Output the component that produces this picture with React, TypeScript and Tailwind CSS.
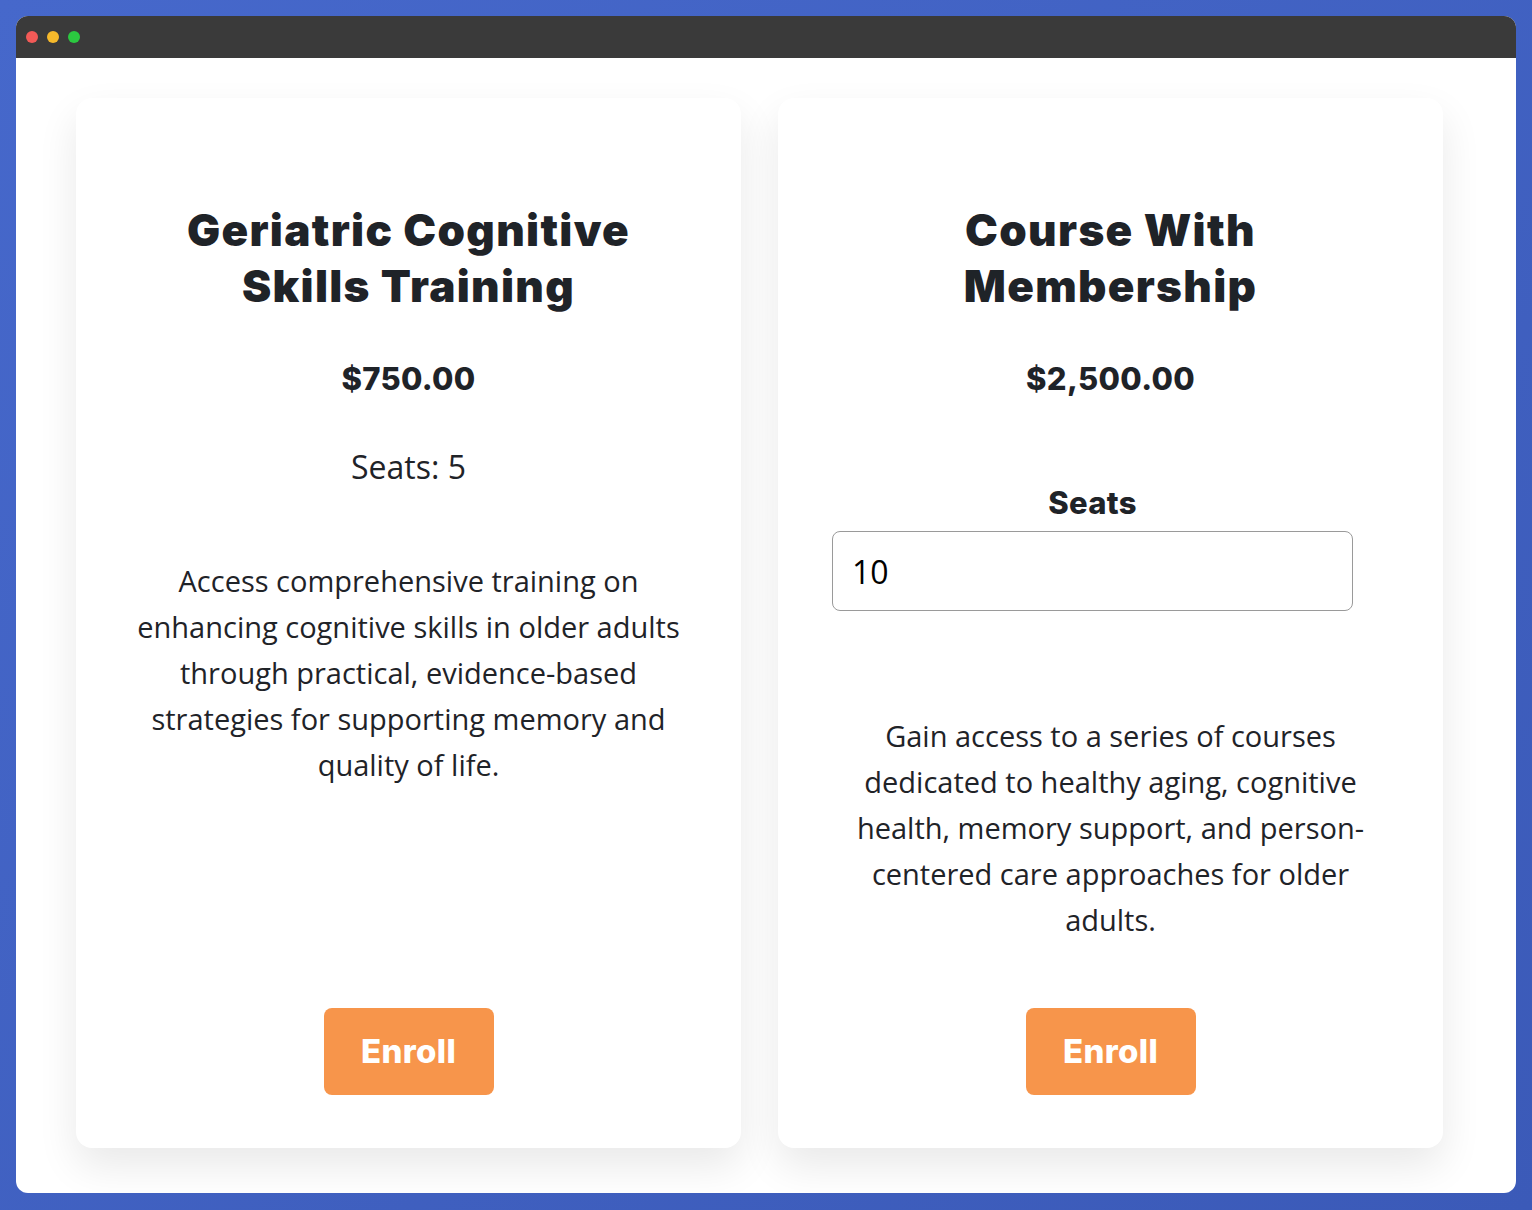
import React from "react"

const heading = { fontFamily: "Inter, 'Liberation Sans', sans-serif" }
const body = { fontFamily: "'Open Sans', sans-serif" }

const Card = ({ children }: { children: React.ReactNode }) => (
  <div className="flex flex-col items-center rounded-2xl bg-white px-[60px] pt-[104px] pb-[53px] shadow-[0_18px_40px_rgba(0,0,0,0.09)]">
    {children}
  </div>
)

const EnrollButton = ({ className }: { className?: string }) => (
  <button
    className={"h-[87px] w-[170px] rounded-lg bg-[#f7954b] text-[33px] font-extrabold tracking-[0.01em] text-white " + (className ?? "")}
    style={heading}
  >
    Enroll
  </button>
)

export default function App() {
  return (
    <div className="min-h-[1210px] bg-gradient-to-br from-[#4668cb] to-[#3b5ab8] p-4 pb-[17px]">
      <div className="overflow-hidden rounded-xl bg-white">
        <div className="flex h-[42px] items-center gap-[9px] bg-[#3a3a3a] pl-[10px]">
          <span className="h-3 w-3 rounded-full bg-[#f25a57]" />
          <span className="h-3 w-3 rounded-full bg-[#f6b92b]" />
          <span className="h-3 w-3 rounded-full bg-[#2bc840]" />
        </div>

        <div className="grid h-[1135px] grid-cols-[665px_665px] items-stretch gap-[37px] pt-10 pb-[45px] pl-[60px]">
          <Card>
            <h2 className="text-center text-[44px] leading-[56px] font-black tracking-[0.03em] text-[#1f2328]" style={heading}>
              Geriatric Cognitive
              <br />
              Skills Training
            </h2>
            <p className="mt-[47px] text-[31px] leading-9 font-extrabold tracking-[0.01em] text-[#1f2328]" style={heading}>
              $750.00
            </p>
            <p className="mt-[50px] text-[32px] leading-10 text-[#1f2328]" style={body}>
              Seats: 5
            </p>
            <p className="mt-[71px] text-center text-[29px] leading-[46px] text-[#1f2328]" style={body}>
              Access comprehensive training on enhancing cognitive skills in older adults through practical, evidence-based strategies for supporting memory and quality of life.
            </p>
            <EnrollButton className="mt-auto" />
          </Card>

          <Card>
            <h2 className="text-center text-[44px] leading-[56px] font-black tracking-[0.03em] text-[#1f2328]" style={heading}>
              Course With
              <br />
              Membership
            </h2>
            <p className="mt-[47px] text-[31px] leading-9 font-extrabold tracking-[0.01em] text-[#1f2328]" style={heading}>
              $2,500.00
            </p>
            <div className="mt-[88px] ml-[-36px] flex w-[521px] flex-col items-center">
              <label className="text-[31px] leading-9 font-extrabold tracking-[0.01em] text-[#1f2328]" style={heading}>
                Seats
              </label>
              <input
                defaultValue="10"
                className="mt-[10px] h-20 w-full rounded-lg border border-[#9a9a9a] px-[19px] text-[32px] text-black outline-none"
                style={body}
              />
            </div>
            <p className="mt-[102px] text-center text-[29px] leading-[46px] text-[#1f2328]" style={body}>
              Gain access to a series of courses dedicated to healthy aging, cognitive health, memory support, and person-centered care approaches for older adults.
            </p>
            <EnrollButton className="mt-auto" />
          </Card>
        </div>
      </div>
    </div>
  )
}
